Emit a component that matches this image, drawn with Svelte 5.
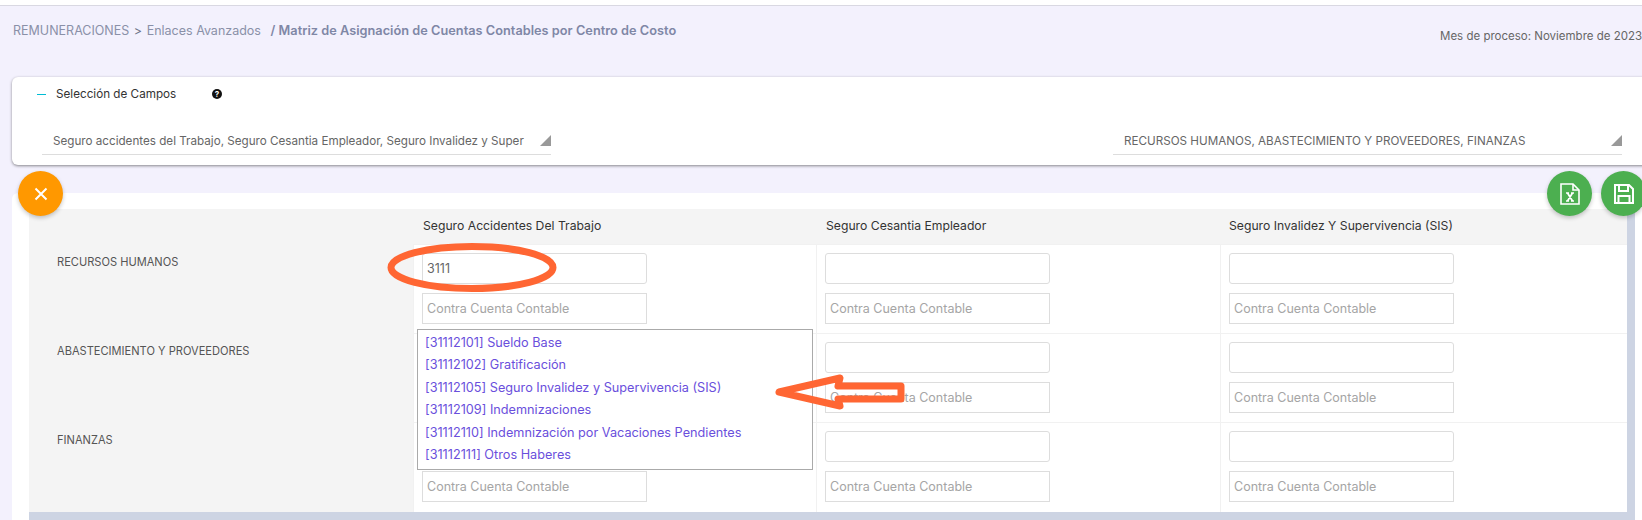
<script>
    const columns = ["Seguro Accidentes Del Trabajo", "Seguro Cesantia Empleador", "Seguro Invalidez Y Supervivencia (SIS)"];
    const rows = ["RECURSOS HUMANOS", "ABASTECIMIENTO Y PROVEEDORES", "FINANZAS"];
    const suggestions = [
        "[31112101] Sueldo Base",
        "[31112102] Gratificación",
        "[31112105] Seguro Invalidez y Supervivencia (SIS)",
        "[31112109] Indemnizaciones",
        "[31112110] Indemnización por Vacaciones Pendientes",
        "[31112111] Otros Haberes"
    ];
</script>

<div class="page">
    <div class="topline"></div>

    <header class="heading">
        <div class="crumbs">
            <span>REMUNERACIONES</span>
            <span class="sep">&gt;</span>
            <span>Enlaces Avanzados</span>
            <strong>/ Matriz de Asignación de Cuentas Contables por Centro de Costo</strong>
        </div>
        <div class="period">Mes de proceso: Noviembre de 2023</div>
    </header>

    <section class="card fields">
        <div class="fieldsTitle">
            <span class="dash"></span>
            <span class="titleText">Selección de Campos</span>
            <span class="help">?</span>
        </div>
        <div class="selects">
            <div class="select">
                <span>Seguro accidentes del Trabajo, Seguro Cesantia Empleador, Seguro Invalidez y Super</span>
                <i class="arrow"></i>
            </div>
            <div class="select">
                <span>RECURSOS HUMANOS, ABASTECIMIENTO Y PROVEEDORES, FINANZAS</span>
                <i class="arrow"></i>
            </div>
        </div>
    </section>

    <section class="card matrix">
        <button class="fab cancel" aria-label="Cancelar">
            <svg width="14" height="14" viewBox="0 0 14 14"><path d="M1.5 1.5l11 11M12.5 1.5l-11 11" stroke="#fff" stroke-width="2" fill="none"/></svg>
        </button>
        <button class="fab excel" aria-label="Exportar">
            <svg width="20" height="22" viewBox="0 0 20 22" fill="none" stroke="#fff" stroke-width="1.6">
                <path d="M1 1h12l6 6v14H1z"/>
                <path d="M13 1v6h6"/>
                <path d="M6 10h3M11 10h3M6 18h3M11 18h3M7.5 10l5 8M12.5 10l-5 8" stroke-width="1.7"/>
            </svg>
        </button>
        <button class="fab save" aria-label="Guardar">
            <svg width="20" height="20" viewBox="0 0 20 20" fill="none" stroke="#fff" stroke-width="2">
                <path d="M1 1h14l4 4v14H1z"/>
                <path d="M5 1v6h9V1M4.500 19v-7h11v7"/>
            </svg>
        </button>

        <div class="tableWrap">
            <div class="table">
                <div class="corner"></div>
                {#each columns as col}
                    <div class="colHead">{col}</div>
                {/each}
                {#each rows as row, r}
                    <div class="rowHead">{row}</div>
                    {#each columns as col, c}
                        <div class="cell">
                            <input type="text" class="account" value={r === 0 && c === 0 ? "3111" : ""} />
                            <input type="text" class="contra" placeholder="Contra Cuenta Contable" />
                            {#if r === 0 && c === 0}
                                <ul class="suggest">
                                    {#each suggestions as item}
                                        <li>{item}</li>
                                    {/each}
                                </ul>
                            {/if}
                        </div>
                    {/each}
                {/each}
            </div>
        </div>
    </section>

    <!-- hand drawn marks on top of the screenshot -->
    <svg class="marks" width="1642" height="520" viewBox="0 0 1642 520" fill="none" stroke="#ff6633" stroke-width="7" stroke-linejoin="round">
        <ellipse cx="472" cy="267.500" rx="81" ry="21"/>
        <path d="M779 392L840 378L838 386H901V399H838L840 406Z"/>
    </svg>
</div>

<style>
    :global(body) {
        margin: 0;
        background: #fff;
    }
    .page {
        position: relative;
        width: 1642px;
        height: 520px;
        overflow: hidden;
        background: #f3f1fd;
        font-family: Inter, "Liberation Sans", sans-serif;
    }
    .topline {
        height: 5px;
        background: #fff;
        border-bottom: 1px solid #d9d8e2;
    }
    .heading {
        display: flex;
        justify-content: space-between;
        height: 71px;
        padding-left: 13px;
        box-sizing: border-box;
        white-space: nowrap;
    }
    .crumbs {
        padding-top: 17px;
        font-size: 12.500px;
        line-height: 16px;
        color: #8a90a8;
    }
    .sep {
        margin: 0 1px;
        color: #6f7488;
    }
    .crumbs strong {
        margin-left: 6px;
        color: #7f87a6;
        font-size: 12.750px;
        font-weight: 600;
        word-spacing: 0.1px;
    }
    .period {
        width: 202px;
        flex: none;
        padding-top: 22px;
        font-size: 11.500px;
        line-height: 16px;
        color: #666;
        overflow: hidden;
    }
    .card {
        margin-left: 12px;
        width: 1640px;
        background: #fff;
        border-radius: 6px;
    }
    .fields {
        height: 88px;
        box-shadow: 0 1px 3px rgba(0, 0, 0, 0.45);
    }
    .fieldsTitle {
        display: flex;
        align-items: center;
        height: 34px;
        padding-left: 25px;
    }
    .dash {
        width: 9px;
        height: 1px;
        background: #00bcd4;
    }
    .titleText {
        margin-left: 10px;
        width: 156px;
        font-size: 11.700px;
        color: #333;
    }
    .help {
        width: 10px;
        height: 10px;
        border-radius: 50%;
        background: #111;
        color: #fff;
        font-size: 8px;
        font-weight: 700;
        line-height: 10px;
        text-align: center;
    }
    .selects {
        display: flex;
        justify-content: space-between;
        width: 1580px;
        margin: 10px 0 0 30px;
    }
    .select {
        position: relative;
        box-sizing: border-box;
        width: 509px;
        height: 34px;
        padding: 13px 0 0 11px;
        border-bottom: 1px solid #ddd;
        font-size: 11.660px;
        line-height: 14px;
        color: #666;
        white-space: nowrap;
    }
    .arrow {
        position: absolute;
        right: 0;
        bottom: 8px;
        width: 11px;
        height: 11px;
        background: #999;
        clip-path: polygon(100% 0, 100% 100%, 0 100%);
    }
    .matrix {
        position: relative;
        margin-top: 28px;
        padding: 16px 0 0 17px;
        height: 400px;
        box-sizing: border-box;
    }
    .tableWrap {
        width: 1606px;
        box-sizing: border-box;
        padding: 0 8px 9px 0;
        background: #cdd4e3;
    }
    .table {
        display: grid;
        grid-template-columns: 384px 403px 404px 407px;
        grid-template-rows: 35px 89px 89px 90px;
        background: #f4f4f4;
    }
    .colHead {
        padding: 9px 0 0 10px;
        font-size: 12.200px;
        line-height: 16px;
        color: #333;
    }
    .colHead:nth-child(4) {
        padding-left: 9px;
    }
    .rowHead {
        padding: 10px 0 0 28px;
        font-size: 11.100px;
        line-height: 16px;
        color: #555;
    }
    .cell {
        position: relative;
        display: flex;
        flex-direction: column;
        gap: 9px;
        padding: 8px;
        background: #fff;
        border-top: 1px solid #f1f1f1;
        border-left: 1px solid #f1f1f1;
    }
    input {
        box-sizing: border-box;
        width: 225px;
        height: 31px;
        padding: 0 4px;
        border: 1px solid #ddd;
        background: #fff;
        color: #666;
        font-family: inherit;
        font-size: 12.500px;
        outline: none;
    }
    .account {
        border-radius: 3px;
    }
    .contra::placeholder {
        color: #a5a5a5;
        opacity: 1;
    }
    .suggest {
        position: absolute;
        z-index: 2;
        top: 84px;
        left: 3px;
        width: 396px;
        height: 141px;
        box-sizing: border-box;
        margin: 0;
        padding: 2px 7px;
        list-style: none;
        background: #fff;
        border: 1px solid #aaa;
    }
    .suggest li {
        height: 22.400px;
        font-size: 12.700px;
        line-height: 22.400px;
        color: #6a4fdc;
        white-space: nowrap;
    }
    .fab {
        position: absolute;
        z-index: 3;
        top: -22px;
        display: flex;
        align-items: center;
        justify-content: center;
        width: 45px;
        height: 45px;
        padding: 0;
        border: 0;
        border-radius: 50%;
        box-shadow: 0 2px 4px rgba(0, 0, 0, 0.22);
    }
    .cancel {
        left: 6px;
        background: #ff9800;
    }
    .excel {
        left: 1535px;
        background: #4caf50;
    }
    .save {
        left: 1589px;
        background: #4caf50;
    }
    .marks {
        position: absolute;
        z-index: 5;
        top: 0;
        left: 0;
        pointer-events: none;
    }
</style>
